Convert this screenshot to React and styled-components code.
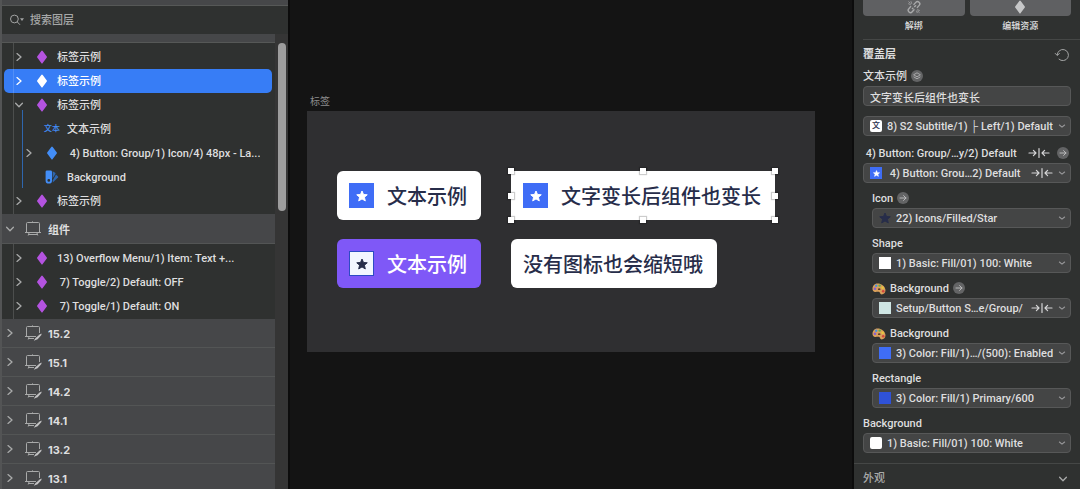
import React from 'react';
import styled, { createGlobalStyle, css } from 'styled-components';

const GlobalStyle = createGlobalStyle`
  * {
    box-sizing: border-box;
  }
  body {
    margin: 0;
    background: #141414;
    color: #dededf;
    font-family: Roboto, "Liberation Sans", "Noto Sans CJK SC", sans-serif;
    font-size: 11px;
    font-weight: 500;
    line-height: 16px;
  }
  button, input, select {
    margin: 0;
    padding: 0;
    border: 0;
    background: none;
    color: inherit;
    font: inherit;
  }
  svg {
    display: block;
    flex: none;
  }
`;

const Page = styled.div`
  display: flex;
  height: 100vh;
  overflow: hidden;
`;

/* ---------- icons ---------- */

const Chevron = ({ open, size = 8 }) => (
  <svg width={size} height={size} viewBox="0 0 8 8" fill="none" stroke="currentColor" strokeWidth="1.3" strokeLinecap="round" strokeLinejoin="round">
    <path d={open ? 'M0.6 2.2L4 5.8L7.4 2.2' : 'M2 0.6L6 4L2 7.4'} />
  </svg>
);

const SmallChevron = () => (
  <svg width="8" height="8" viewBox="0 0 8 8" fill="none" stroke="#98989a" strokeWidth="1.1" strokeLinecap="round" strokeLinejoin="round">
    <path d="M1.4 3L4 5.2L6.6 3" />
  </svg>
);

const Diamond = ({ color }) => (
  <svg width="12" height="14" viewBox="0 0 12 14" fill={color}>
    <path d="M6 0.4Q6.4 0.4 6.7 0.9L10.8 6.5Q11.1 7 10.8 7.5L6.7 13.1Q6.4 13.6 6 13.6Q5.6 13.6 5.3 13.1L1.2 7.5Q0.9 7 1.2 6.5L5.3 0.9Q5.6 0.4 6 0.4Z" />
  </svg>
);

const Swatches = () => (
  <svg width="14" height="14" viewBox="0 0 14 14">
    <path d="M7.6 1.2L10.2 2.8Q10.8 3.2 10.4 3.9L7.6 8.6Z" fill="#2f66ad" />
    <path d="M11 4.6L13 6.5Q13.5 7 13 7.6L7.8 12.6V10.2Z" fill="#2f66ad" />
    <path fillRule="evenodd" d="M2 0.4H5.6Q7 0.4 7 1.8V10.4A3.2 3.2 0 0 1 0.6 10.4V1.8Q0.6 0.4 2 0.4ZM3.8 9A1.4 1.4 0 1 0 3.8 11.8A1.4 1.4 0 1 0 3.8 9Z" fill="#438ef7" />
  </svg>
);

const Artboard = ({ pen }) => (
  <svg width="18" height="16" viewBox="0 0 18 16" fill="none" stroke="#a9aaaa" strokeWidth="1">
    <path d="M8.5 0.4V1.5M2.5 11.5V2.5Q2.5 1.5 3.5 1.5H14.5Q15.5 1.5 15.5 2.5V8" />
    {pen ? (
      <>
        <path d="M1 11.5H12M5 13.5H10M5.2 11.5L4.2 14.5" />
        <path d="M17.6 8.4L17.4 10L13.6 14.2L9.8 15.8L11.4 13.2L15.6 9.4Z" fill="#c4c4c5" stroke="none" />
      </>
    ) : (
      <path d="M15.5 7V11.5M1 11.5H17M5 13.5H13M5.2 11.5L4.2 14.5M12.8 11.5L13.8 14.5" />
    )}
  </svg>
);

const SearchIcon = () => (
  <svg width="16" height="12" viewBox="0 0 16 12" fill="none" stroke="#a3a4a4" strokeWidth="1">
    <circle cx="5.4" cy="5" r="3.9" />
    <path d="M8.2 7.8L11 10.8" />
    <path d="M11 4.2H15L13 7Z" fill="#a3a4a4" stroke="none" />
  </svg>
);

const Star = ({ size = 12, color = '#fff' }) => (
  <svg width={size} height={size} viewBox="0 0 24 24" fill={color} stroke={color} strokeWidth="2" strokeLinejoin="round">
    <path d="M12 2L15 9L22.5 9.6L16.8 14.4L18.6 21.8L12 17.8L5.4 21.8L7.2 14.4L1.5 9.6L9 9Z" />
  </svg>
);

const BrokenLink = () => (
  <svg width="14" height="14" viewBox="0 0 14 14" fill="none" stroke="#a9aaab" strokeWidth="1.4" strokeLinecap="round">
    <path d="M7 4.4L8.8 2.4A2.2 2.2 0 0 1 12.2 5.4L10.4 7.4" />
    <path d="M3.6 6.6L1.8 8.8A2.2 2.2 0 0 0 5.2 11.8L7 9.8" />
    <path d="M8.6 5.8L5.4 8.6" strokeDasharray="1.2 2.4" />
    <path d="M1.6 3.8L3.4 4.6M4 1.6L4.6 3.4M12.4 10.4L10.6 9.8M10.2 12.6L9.6 11M1.8 1.8L3.2 3.2M12.2 12.4L10.8 11.2" strokeWidth="0.8" />
  </svg>
);

const ResetIcon = () => (
  <svg width="16" height="14" viewBox="0 0 16 14" fill="none" stroke="#a3a4a4" strokeWidth="1" strokeLinecap="round" strokeLinejoin="round">
    <path d="M3.2 7A5.6 5.6 0 1 1 5 11.2" />
    <path d="M1.2 5.4L3.2 7.4L5.4 5.6" />
  </svg>
);

const FitWidth = () => (
  <svg width="22" height="10" viewBox="0 0 22 10" fill="none" stroke="#d6d6d7" strokeWidth="1.2" strokeLinecap="round" strokeLinejoin="round">
    <path d="M1 5H8M5.4 2.4L8 5L5.4 7.6M11 0.6V9.4M21 5H14M16.6 2.4L14 5L16.6 7.6" />
  </svg>
);

const Palette = () => (
  <svg width="14" height="12" viewBox="0 0 14 12">
    <path d="M4.4 0.6C8 -0.2 12.8 2.4 13.4 6.4C13.8 9.4 12.2 11.4 9.6 11.4C7.8 11.4 8.4 9.2 6.8 8.8C5 8.4 3.6 9.6 1.8 8.4C-0.8 6.6 0.6 1.6 4.4 0.6Z" fill="#d9a05b" />
    <circle cx="3" cy="5.8" r="1.3" fill="#8a5fd0" />
    <circle cx="4.2" cy="2.8" r="1.2" fill="#4a8fe0" />
    <circle cx="7.6" cy="2.6" r="1.2" fill="#5fae4b" />
    <circle cx="10.6" cy="4.8" r="1.2" fill="#e8c93c" />
    <circle cx="11.2" cy="8.2" r="1.3" fill="#d2453c" />
    <ellipse cx="7.2" cy="6.2" rx="1.3" ry="0.9" fill="#5a3a28" />
  </svg>
);

const ArrowGlyph = () => (
  <svg width="8" height="8" viewBox="0 0 8 8" fill="none" stroke="#b9b9ba" strokeWidth="1" strokeLinecap="round" strokeLinejoin="round">
    <path d="M1 4H7M4.6 1.6L7 4L4.6 6.4" />
  </svg>
);

const LayersGlyph = () => (
  <svg width="8" height="8" viewBox="0 0 8 8" fill="none" stroke="#b9b9ba" strokeWidth="0.8" strokeLinejoin="round">
    <path d="M4 0.8L7.4 2.8L4 4.8L0.6 2.8Z" />
    <path d="M0.6 4.8L4 6.8L7.4 4.8" />
  </svg>
);

/* ---------- layer list ---------- */

const Sidebar = styled.aside`
  flex: none;
  display: flex;
  flex-direction: column;
  width: 290px;
  background: #353535;
  border-left: 2px solid #535455;
  border-right: 2px solid #0c0c0c;
`;

const TopStrip = styled.div`
  flex: none;
  height: 6px;
  background: #464749;
  border-bottom: 1px solid #565857;
`;

const Search = styled.label`
  flex: none;
  display: flex;
  align-items: center;
  gap: 5px;
  height: 28px;
  padding: 0 7px;
  background: #2f3130;

  input {
    flex: 1;
    min-width: 0;
    padding-top: 2px;
    outline: none;
  }
  input::placeholder {
    color: #a6a7a7;
    opacity: 1;
  }
`;

const Scroller = styled.div`
  flex: 1;
  min-height: 0;
  display: flex;
  background: #353535;
`;

const Layers = styled.div`
  flex: 1;
  min-width: 0;
  overflow: hidden;
  background: #464749;
`;

const ScrollTrack = styled.div`
  flex: none;
  width: 13px;
  padding: 9px 2px 0 3px;
`;

const ScrollThumb = styled.div`
  height: 168px;
  border-radius: 4px;
  background: #9d9d9d;
`;

const ClippedRow = styled.div`
  height: 9px;
  border-bottom: 1px solid #565857;
`;

const Tree = styled.ul`
  position: relative;
  margin: 0;
  padding: 2px 0 1px;
  list-style: none;
  background: #2f3130;

  &::before {
    content: '';
    position: absolute;
    z-index: 1;
    top: 0;
    bottom: 0;
    left: 11px;
    width: 1px;
    background: rgba(255, 255, 255, 0.14);
  }
`;

const Branch = styled.ul`
  position: relative;
  margin: 0;
  padding: 0 0 0 10px;
  list-style: none;

  &::before {
    content: '';
    position: absolute;
    top: -7px;
    bottom: 1px;
    left: 20px;
    width: 1px;
    background: #2f66ad;
  }
`;

const Row = styled.div`
  display: flex;
  align-items: center;
  gap: 6px;
  height: 24px;
  padding: 0 8px 0 9px;

  ${({ $selected }) => $selected && css`
    margin: 0 3px 0 2px;
    padding-left: 7px;
    border-radius: 5px;
    background: #377df6;
    color: #fff;
  `}
`;

const PageRow = styled(Row)`
  height: 29px;
  padding-left: 0;
  border-bottom: 1px solid #535555;
  font-family: Inter, "Noto Sans CJK SC", sans-serif;
  font-weight: 700;
`;

const SectionRow = styled(PageRow)`
  height: 30px;
`;

const Toggle = styled.button`
  flex: none;
  display: flex;
  justify-content: center;
  width: 16px;
  color: ${({ $bright }) => ($bright ? '#fff' : '#a9aaaa')};
`;

const LayerIcon = styled.span`
  flex: none;
  display: flex;
  justify-content: center;
  width: 18px;
  color: #438ef7;
  font-size: 8px;
`;

const Name = styled.span`
  padding-top: 2px;
  overflow: hidden;
  text-overflow: ellipsis;
  white-space: pre;
`;

const icons = {
  symbol: <Diamond color="#b453e0" />,
  selected: <Diamond color="#fff" />,
  nested: <Diamond color="#438ef7" />,
  text: '文本',
  fill: <Swatches />
};

const Layer = ({ name, icon = 'symbol', open, leaf, selected, children }) => (
  <li>
    <Row $selected={selected}>
      <Toggle as={leaf ? 'span' : 'button'} $bright={selected} aria-label={leaf ? undefined : '展开'}>
        {!leaf && <Chevron open={open} />}
      </Toggle>
      <LayerIcon>{icons[icon]}</LayerIcon>
      <Name>{name}</Name>
    </Row>
    {children && <Branch>{children}</Branch>}
  </li>
);

const PageItem = ({ name }) => (
  <PageRow>
    <Toggle aria-label="展开"><Chevron /></Toggle>
    <LayerIcon><Artboard pen /></LayerIcon>
    <Name>{name}</Name>
  </PageRow>
);

const pages = ['15.2', '15.1', '14.2', '14.1', '13.2', '13.1'];

/* ---------- canvas ---------- */

const Canvas = styled.main`
  flex: 1;
  min-width: 0;
  padding: 93px 37px 0 17px;
`;

const BoardTitle = styled.div`
  height: 18px;
  padding: 1px 0 0 3px;
  color: #8b8b8c;
  font-size: 10px;
  font-weight: 400;
`;

const Board = styled.div`
  display: grid;
  grid-template-columns: max-content max-content;
  justify-items: start;
  align-content: start;
  gap: 19px 30px;
  min-height: 241px;
  padding: 60px 30px;
  background: #2f2f31;
`;

const Chip = styled.div`
  position: relative;
  display: flex;
  align-items: center;
  gap: 13px;
  height: 49px;
  padding: 0 14px 0 12px;
  border-radius: ${({ $square }) => ($square ? '0' : '6px')};
  background: ${({ $purple }) => ($purple ? '#7f58f7' : '#fff')};
  color: ${({ $purple }) => ($purple ? '#fff' : '#272d4a')};
  font-family: "Noto Sans CJK SC", sans-serif;
  font-size: 20px;
  line-height: 28px;
  white-space: nowrap;
`;

const ChipIcon = styled.span`
  display: flex;
  align-items: center;
  justify-content: center;
  width: 25px;
  height: 25px;
  border: 1px solid ${({ $light }) => ($light ? '#2d4bc4' : '#3f6df6')};
  background: ${({ $light }) => ($light ? '#f3f6ff' : '#3f6df6')};
`;

const Handle = styled.i`
  position: absolute;
  top: ${({ $y }) => $y};
  left: ${({ $x }) => $x};
  width: 6px;
  height: 6px;
  margin: -3px;
  background: #fff;
  box-shadow: 0 0 1px 1px rgba(0, 0, 0, 0.2);
`;

const handles = [
  ['0%', '0%'], ['50%', '0%'], ['100%', '0%'],
  ['0%', '50%'], ['100%', '50%'],
  ['0%', '100%'], ['50%', '100%'], ['100%', '100%']
];

/* ---------- inspector ---------- */

const Inspector = styled.aside`
  flex: none;
  display: flex;
  flex-direction: column;
  width: 228px;
  border-left: 2px solid #0c0c0c;
  background: #2f3130;

  > * {
    flex: none;
  }
`;

const Actions = styled.div`
  display: grid;
  grid-template-columns: 1fr 1fr;
  gap: 5px;
  margin-left: 9px;
  padding: 0 9px 3px 0;
  border-bottom: 1px solid #454746;
`;

const Action = styled.div`
  display: flex;
  flex-direction: column;
  font-size: 9px;
  line-height: 20px;
  text-align: center;

  button {
    display: flex;
    justify-content: center;
    height: 16px;
    border-radius: 0 0 4px 4px;
    background: #5f6062;
  }
`;

const Heading = styled.h2`
  display: flex;
  align-items: center;
  justify-content: space-between;
  height: 26px;
  margin: 0;
  padding: 4px 10px 0 9px;
  font-size: 11px;
  font-weight: 700;
`;

const Fields = styled.div`
  display: flex;
  flex-direction: column;
  gap: 5px;
  padding: 0 9px 10px;
  border-bottom: 1px solid #454746;
`;

const Field = styled.div`
  margin-left: ${({ $indent }) => ($indent ? '9px' : '0')};
  padding: ${({ $bare }) => ($bare ? '5px 0 2px' : '0')};
`;

const Caption = styled.div`
  display: flex;
  align-items: center;
  gap: 4px;
  height: 20px;
  padding-right: 2px;
  white-space: pre;

  label {
    display: flex;
    align-items: center;
    gap: 4px;
    padding-top: 2px;
  }
`;

const Badge = styled.button`
  flex: none;
  display: flex;
  align-items: center;
  justify-content: center;
  width: 12px;
  height: 12px;
  border-radius: 50%;
  background: #636465;
`;

const Push = styled.span`
  display: flex;
  align-items: center;
  gap: 7px;
  margin-left: auto;
`;

const Control = styled.div`
  display: flex;
  align-items: center;
  gap: 5px;
  height: 20px;
  padding: 0 4px 0 6px;
  border: 1px solid #575858;
  border-radius: 4px;
  background: #444545;

  select, input {
    flex: 1;
    min-width: 0;
    height: 18px;
    padding-top: 2px;
    appearance: none;
    outline: none;
    white-space: pre;
  }
`;

const Swatch = styled.span`
  flex: none;
  display: flex;
  align-items: center;
  justify-content: center;
  width: 12px;
  height: 12px;
  border-radius: ${({ $round }) => ($round ? '2px' : '0')};
  background: ${({ $color }) => $color};
  color: #272d4a;
  font-size: 8px;
`;

const Footer = styled.button`
  display: flex;
  align-items: center;
  justify-content: space-between;
  height: 30px;
  padding: 0 13px 0 9px;
  color: #a9aaaa;
`;

const overrides = [
  { id: 's2', bare: true, value: '8) S2 Subtitle/1) ├ Left/1) Default', color: '#fff', round: true, glyph: '文' },
  { id: 'group', label: '\u00a04) Button: Group/…y/2) Default', fitLabel: true, value: '\u00a04) Button: Grou…2) Default', fit: true, color: '#3f6df6', glyph: <Star size={7} /> },
  { id: 'icon', indent: true, label: 'Icon', link: true, value: '22) Icons/Filled/Star', color: 'none', glyph: <Star size={12} color="#272d4a" /> },
  { id: 'shape', indent: true, label: 'Shape', value: '1) Basic: Fill/01) 100: White', color: '#fff' },
  { id: 'bg1', indent: true, label: 'Background', palette: true, link: true, value: 'Setup/Button S…e/Group/', fit: true, color: '#cfe6e4' },
  { id: 'bg2', indent: true, label: 'Background', palette: true, value: '3) Color: Fill/1)…/(500): Enabled', color: '#3f6df6' },
  { id: 'rect', indent: true, label: 'Rectangle', value: '3) Color: Fill/1) Primary/600', color: '#2f52d8' },
  { id: 'bg3', label: 'Background', value: '1) Basic: Fill/01) 100: White', color: '#fff', round: true }
];

const Override = ({ id, label, value, color, glyph, round, indent, bare, palette, link, fit, fitLabel }) => (
  <Field $indent={indent} $bare={bare}>
    {label && (
      <Caption>
        <label htmlFor={id}>{palette && <Palette />}{label}</label>
        {fitLabel && <Push><FitWidth /><Badge aria-label="前往"><ArrowGlyph /></Badge></Push>}
        {link && <Badge aria-label="前往"><ArrowGlyph /></Badge>}
      </Caption>
    )}
    <Control>
      <Swatch $color={color} $round={round}>{glyph}</Swatch>
      <select id={id} aria-label={label ? undefined : value}>
        <option>{value}</option>
      </select>
      {fit && <FitWidth />}
      <SmallChevron />
    </Control>
  </Field>
);

const App = () => (
  <Page>
    <GlobalStyle />
    <Sidebar>
      <TopStrip />
      <Search>
        <SearchIcon />
        <input type="text" placeholder="搜索图层" aria-label="搜索图层" />
      </Search>
      <Scroller>
        <Layers>
          <ClippedRow />
          <Tree>
            <Layer name="标签示例" />
            <Layer name="标签示例" icon="selected" selected />
            <Layer name="标签示例" open>
              <Layer name="文本示例" icon="text" leaf />
              <Layer name=" 4) Button: Group/1) Icon/4) 48px - La..." icon="nested" />
              <Layer name="Background" icon="fill" leaf />
            </Layer>
            <Layer name="标签示例" />
          </Tree>
          <SectionRow>
            <Toggle aria-label="收起"><Chevron open /></Toggle>
            <LayerIcon><Artboard /></LayerIcon>
            <Name>组件</Name>
          </SectionRow>
          <Tree>
            <Layer name="13) Overflow Menu/1) Item: Text +..." />
            <Layer name=" 7) Toggle/2) Default: OFF" />
            <Layer name=" 7) Toggle/1) Default: ON" />
          </Tree>
          {pages.map((name) => <PageItem key={name} name={name} />)}
        </Layers>
        <ScrollTrack><ScrollThumb /></ScrollTrack>
      </Scroller>
    </Sidebar>

    <Canvas>
      <BoardTitle>标签</BoardTitle>
      <Board>
        <Chip>
          <ChipIcon><Star /></ChipIcon>
          文本示例
        </Chip>
        <Chip $square>
          <ChipIcon><Star /></ChipIcon>
          文字变长后组件也变长
          {handles.map(([x, y]) => <Handle key={x + y} $x={x} $y={y} />)}
        </Chip>
        <Chip $purple>
          <ChipIcon $light><Star color="#272d4a" /></ChipIcon>
          文本示例
        </Chip>
        <Chip>没有图标也会缩短哦</Chip>
      </Board>
    </Canvas>

    <Inspector>
      <Actions>
        <Action>
          <button aria-label="解绑"><BrokenLink /></button>
          解绑
        </Action>
        <Action>
          <button aria-label="编辑资源"><Diamond color="#c6c7c8" /></button>
          编辑资源
        </Action>
      </Actions>
      <Heading>
        覆盖层
        <button aria-label="重置"><ResetIcon /></button>
      </Heading>
      <Fields>
        <Field>
          <Caption>
            <label htmlFor="sample">文本示例</label>
            <Badge aria-label="图层"><LayersGlyph /></Badge>
          </Caption>
          <Control>
            <input id="sample" type="text" defaultValue="文字变长后组件也变长" />
          </Control>
        </Field>
        {overrides.map((item) => <Override key={item.id} {...item} />)}
      </Fields>
      <Footer>
        外观
        <Chevron open />
      </Footer>
    </Inspector>
  </Page>
);

export default App;
